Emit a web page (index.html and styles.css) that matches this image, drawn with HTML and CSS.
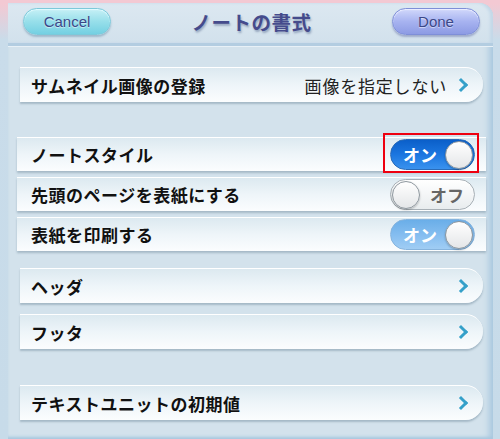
FILE: index.html
```html
<!DOCTYPE html>
<html lang="ja">
<head>
    <meta charset="UTF-8">
    <meta name="viewport" content="width=device-width, initial-scale=1.0">
    <title>ノートの書式</title>
    <link rel="stylesheet" href="styles.css">
</head>
<body>
    <div class="panel">
        <header class="nav">
            <button class="btn cancel">Cancel</button>
            <h1>ノートの書式</h1>
            <button class="btn done">Done</button>
        </header>

        <div class="content">
            <div class="row link">
                <span class="label">サムネイル画像の登録</span>
                <span class="value">画像を指定しない</span>
                <span class="chevron"></span>
            </div>

            <div class="group">
                <div class="row wide">
                    <span class="label">ノートスタイル</span>
                    <div class="switch-wrap">
                        <div class="switch on">
                            <span class="text">オン</span>
                            <span class="knob"></span>
                        </div>
                        <div class="highlight"></div>
                    </div>
                </div>
                <div class="row wide">
                    <span class="label">先頭のページを表紙にする</span>
                    <div class="switch-wrap">
                        <div class="switch off">
                            <span class="knob"></span>
                            <span class="text">オフ</span>
                        </div>
                    </div>
                </div>
                <div class="row wide">
                    <span class="label">表紙を印刷する</span>
                    <div class="switch-wrap">
                        <div class="switch on dim">
                            <span class="text">オン</span>
                            <span class="knob"></span>
                        </div>
                    </div>
                </div>
            </div>

            <div class="group pair">
                <div class="row link">
                    <span class="label">ヘッダ</span>
                    <span class="chevron"></span>
                </div>
                <div class="row link">
                    <span class="label">フッタ</span>
                    <span class="chevron"></span>
                </div>
            </div>

            <div class="row link last">
                <span class="label">テキストユニットの初期値</span>
                <span class="chevron"></span>
            </div>
        </div>
    </div>
</body>
</html>
```

FILE: styles.css
```css
body, h1 {
    margin: 0;
    padding: 0;
}

body {
    width: 500px;
    height: 439px;
    overflow: hidden;
    font-family: "Noto Sans CJK JP", "Noto Sans", sans-serif;
    background: linear-gradient(180deg, #f3c9d3 0px, #f3c9d3 4px, #c9dcea 40px, #c7dbe9 100%);
}

.panel {
    margin: 3px 0 0 8px;
    width: 485px;
    height: 436px;
    background-color: #d3e2ec;
    border-top-right-radius: 14px;
    box-shadow: inset -6px 0 6px -2px #a9c8df, inset 0 -3px 3px -1px #a9c8df;
    overflow: hidden;
}

/* Navigation bar */
.nav {
    height: 43px;
    display: flex;
    align-items: flex-start;
    justify-content: space-between;
    padding: 5px 13px 0 15px;
    box-sizing: border-box;
    background: linear-gradient(180deg, #dce8f1, #d2e1ec);
    border-bottom: 3px solid #b3cde1;
    box-shadow: 0 1px 0 #e8f1f7, inset -3px 0 3px #c3d8e8;
    border-top-right-radius: 14px;
}

.nav h1 {
    font-size: 19.5px;
    line-height: 28px;
    font-weight: bold;
    color: #454b8c;
    text-shadow: 1px 2px 2px rgba(40, 60, 110, 0.35);
    letter-spacing: 0.5px;
}

.btn {
    width: 88px;
    height: 27px;
    border-radius: 14px;
    font-family: "Liberation Sans", Arial, sans-serif;
    font-size: 15px;
    color: #3b4787;
    text-shadow: 0 1px 1px rgba(255, 255, 255, 0.6);
    padding: 0;
}

.cancel {
    border: 1px solid #7cc9da;
    background: linear-gradient(180deg, #c6f0f6 0%, #97dfea 50%, #74d0e2 100%);
    box-shadow: 0 2px 2px rgba(60, 110, 140, 0.35), inset 0 1px 1px #e4fbff;
}

.done {
    border: 1px solid #7f8fd8;
    background: linear-gradient(180deg, #d1d8fb 0%, #a7b3f0 50%, #8d9be4 100%);
    box-shadow: 0 2px 2px rgba(60, 70, 140, 0.35), inset 0 1px 1px #eef0ff;
}

/* List rows */
.content {
    padding: 21px 0 0 12px;
}

.row {
    height: 35px;
    width: 463px;
    box-sizing: border-box;
    display: flex;
    align-items: center;
    padding: 0 0 0 11px;
    background: linear-gradient(180deg, #dce9f0 0%, #eef5f9 50%, #fbfdfe 100%);
    border-top: 1px solid #ffffff;
    box-shadow: 0 2px 2px rgba(80, 110, 130, 0.35);
    font-size: 17px;
    color: #111;
}

.row.link {
    border-radius: 0 18px 18px 0;
    padding-right: 13px;
}

.label {
    font-weight: bold;
    letter-spacing: 0.5px;
    flex: 1;
}

.value {
    letter-spacing: 0.8px;
    margin-right: 9px;
    color: #222;
}

.chevron {
    width: 7px;
    height: 7px;
    border-top: 3px solid #35a0c9;
    border-right: 3px solid #35a0c9;
    transform: rotate(45deg);
    margin-right: 4px;
}

.group {
    margin-top: 35px;
    margin-left: -3px;
    display: flex;
    flex-direction: column;
    gap: 6px;
}

.row.wide {
    width: 469px;
    height: 34px;
    padding-left: 14px;
    padding-right: 11px;
}

.group.pair {
    margin-top: 17px;
    margin-left: 0;
    gap: 11px;
}

.row.last {
    margin-top: 36px;
}

/* Switches */
.switch-wrap {
    position: relative;
}

.switch {
    width: 85px;
    height: 31px;
    box-sizing: border-box;
    border-radius: 16px;
    display: flex;
    align-items: center;
    justify-content: space-between;
    padding: 0 1px;
    font-size: 17px;
    font-weight: bold;
}

.switch.on {
    background: linear-gradient(180deg, #0b5fc9 0%, #1b76e0 50%, #3a92ee 100%);
    border: 1px solid #2a6bb8;
    color: #fff;
    padding-left: 12px;
}

.switch.on.dim {
    background: linear-gradient(180deg, #6aaee8 0%, #84bdf0 50%, #a0cdf4 100%);
    border-color: #86b4de;
}

.switch.off {
    background: linear-gradient(180deg, #ffffff 0%, #f4f6f7 50%, #e8ecee 100%);
    border: 1px solid #a8b0b6;
    color: #666;
    padding-right: 10px;
}

.knob {
    width: 28px;
    height: 28px;
    border-radius: 50%;
    background: linear-gradient(180deg, #ffffff, #e4e6e8);
    border: 1px solid #8e979e;
    box-sizing: border-box;
    box-shadow: 0 1px 2px rgba(0, 0, 0, 0.25);
}

.highlight {
    position: absolute;
    top: -6px;
    left: -7px;
    width: 96px;
    height: 40px;
    box-sizing: border-box;
    border: 2px solid #ee0010;
}
```
